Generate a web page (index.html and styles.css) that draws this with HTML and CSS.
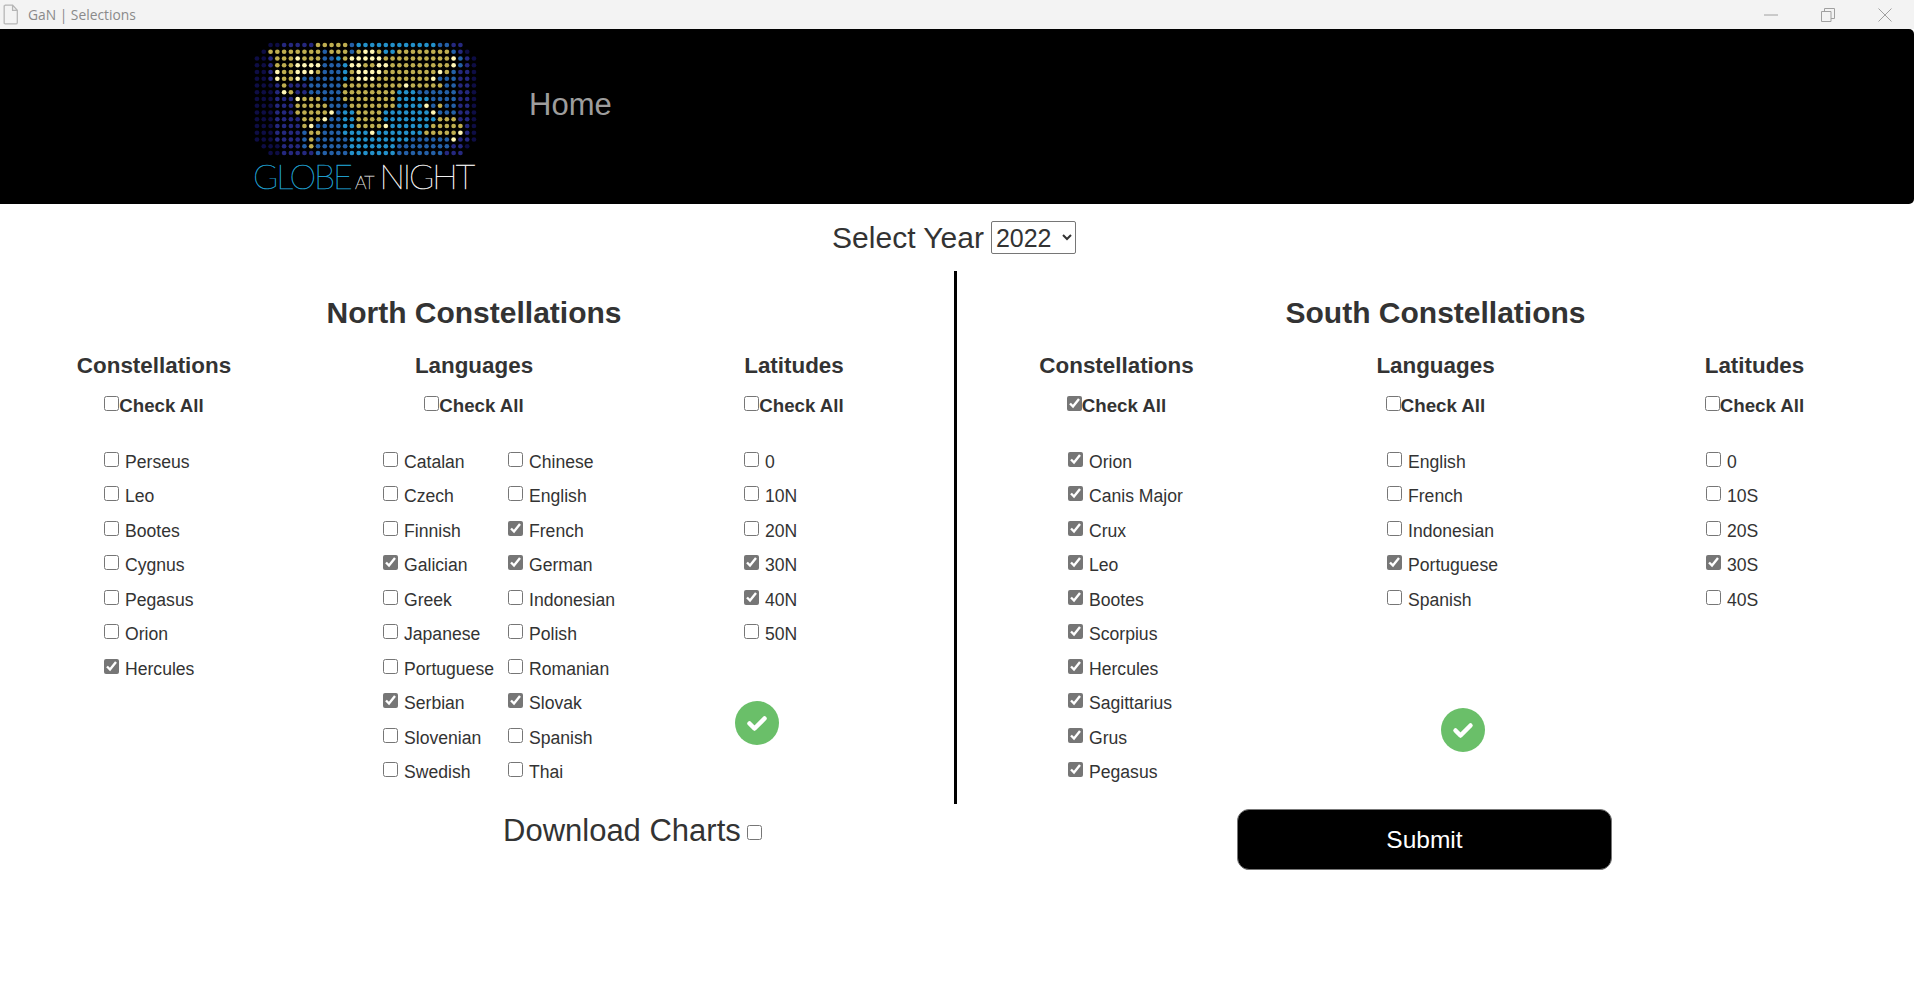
FILE: index.html
```html
<!DOCTYPE html>
<html lang="en">
<head>
    <meta charset="UTF-8">
    <meta name="viewport" content="width=device-width, initial-scale=1.0">
    <title>GaN | Selections</title>
    <link rel="stylesheet" href="styles.css">
</head>
<body>
    <div class="titlebar">
        <svg class="file-icon" width="16" height="21" viewBox="0 0 14 20"><path d="M1.500 1h7l4.500 5v11.500a1.500 1.500 0 0 1-1.500 1.500h-10a1 1 0 0 1-1-1v-16a.5.5 0 0 1 .5-.5zM8.500 1v5h4.500" fill="none" stroke="#b5b5b5" stroke-width="1.200"/></svg>
        <span class="titlebar-text">GaN | Selections</span>
        <div class="window-controls">
            <svg width="14" height="14" viewBox="0 0 14 14"><path d="M0 7h14" stroke="#a0a0a0" stroke-width="1"/></svg>
            <svg width="14" height="14" viewBox="0 0 14 14"><path d="M.5 3.500h9.500v10h-9.500zM3.500 3.500v-3h10v10h-3.500" fill="none" stroke="#a0a0a0" stroke-width="1"/></svg>
            <svg width="14" height="14" viewBox="0 0 14 14"><path d="M.5.500l13 13M13.500.500l-13 13" stroke="#a0a0a0" stroke-width="1"/></svg>
        </div>
    </div>

    <nav class="navbar">
        <div class="logo">
            <svg id="logo-dots" class="logo-dots" width="225" height="116" viewBox="0 0 225 116"></svg>
            <div class="wordmark"><span class="word-globe">GLOBE</span><span class="word-at">AT</span><span class="word-night">NIGHT</span></div>
        </div>
        <a class="nav-link" href="#">Home</a>
    </nav>

    <div class="year-row">
        <label class="year-label" for="year">Select Year</label>
        <select class="year-select" id="year">
            <option>2022</option>
        </select>
    </div>

    <div class="panels">
        <section class="panel panel-north">
            <h2 class="panel-title">North Constellations</h2>
            <div class="columns">
                <div class="column">
                    <h3 class="column-title">Constellations</h3>
                    <label class="check-all"><input type="checkbox">Check All</label>
                    <div class="items">
                        <label class="item"><input type="checkbox">Perseus</label>
                        <label class="item"><input type="checkbox">Leo</label>
                        <label class="item"><input type="checkbox">Bootes</label>
                        <label class="item"><input type="checkbox">Cygnus</label>
                        <label class="item"><input type="checkbox">Pegasus</label>
                        <label class="item"><input type="checkbox">Orion</label>
                        <label class="item"><input type="checkbox" checked>Hercules</label>
                    </div>
                </div>
                <div class="column">
                    <h3 class="column-title">Languages</h3>
                    <label class="check-all"><input type="checkbox">Check All</label>
                    <div class="items items-double">
                        <label class="item"><input type="checkbox">Catalan</label>
                        <label class="item"><input type="checkbox">Chinese</label>
                        <label class="item"><input type="checkbox">Czech</label>
                        <label class="item"><input type="checkbox">English</label>
                        <label class="item"><input type="checkbox">Finnish</label>
                        <label class="item"><input type="checkbox" checked>French</label>
                        <label class="item"><input type="checkbox" checked>Galician</label>
                        <label class="item"><input type="checkbox" checked>German</label>
                        <label class="item"><input type="checkbox">Greek</label>
                        <label class="item"><input type="checkbox">Indonesian</label>
                        <label class="item"><input type="checkbox">Japanese</label>
                        <label class="item"><input type="checkbox">Polish</label>
                        <label class="item"><input type="checkbox">Portuguese</label>
                        <label class="item"><input type="checkbox">Romanian</label>
                        <label class="item"><input type="checkbox" checked>Serbian</label>
                        <label class="item"><input type="checkbox" checked>Slovak</label>
                        <label class="item"><input type="checkbox">Slovenian</label>
                        <label class="item"><input type="checkbox">Spanish</label>
                        <label class="item"><input type="checkbox">Swedish</label>
                        <label class="item"><input type="checkbox">Thai</label>
                    </div>
                </div>
                <div class="column">
                    <h3 class="column-title">Latitudes</h3>
                    <label class="check-all"><input type="checkbox">Check All</label>
                    <div class="items">
                        <label class="item"><input type="checkbox">0</label>
                        <label class="item"><input type="checkbox">10N</label>
                        <label class="item"><input type="checkbox">20N</label>
                        <label class="item"><input type="checkbox" checked>30N</label>
                        <label class="item"><input type="checkbox" checked>40N</label>
                        <label class="item"><input type="checkbox">50N</label>
                    </div>
                    <div class="done done-north">
                        <svg width="22" height="18" viewBox="0 0 22 18"><path d="M3.500 9.500l5 5 10-10" fill="none" stroke="#fff" stroke-width="4.500" stroke-linecap="round" stroke-linejoin="round"/></svg>
                    </div>
                </div>
            </div>
        </section>

        <section class="panel panel-south">
            <h2 class="panel-title">South Constellations</h2>
            <div class="columns">
                <div class="column">
                    <h3 class="column-title">Constellations</h3>
                    <label class="check-all"><input type="checkbox" checked>Check All</label>
                    <div class="items">
                        <label class="item"><input type="checkbox" checked>Orion</label>
                        <label class="item"><input type="checkbox" checked>Canis Major</label>
                        <label class="item"><input type="checkbox" checked>Crux</label>
                        <label class="item"><input type="checkbox" checked>Leo</label>
                        <label class="item"><input type="checkbox" checked>Bootes</label>
                        <label class="item"><input type="checkbox" checked>Scorpius</label>
                        <label class="item"><input type="checkbox" checked>Hercules</label>
                        <label class="item"><input type="checkbox" checked>Sagittarius</label>
                        <label class="item"><input type="checkbox" checked>Grus</label>
                        <label class="item"><input type="checkbox" checked>Pegasus</label>
                    </div>
                </div>
                <div class="column">
                    <h3 class="column-title">Languages</h3>
                    <label class="check-all"><input type="checkbox">Check All</label>
                    <div class="items">
                        <label class="item"><input type="checkbox">English</label>
                        <label class="item"><input type="checkbox">French</label>
                        <label class="item"><input type="checkbox">Indonesian</label>
                        <label class="item"><input type="checkbox" checked>Portuguese</label>
                        <label class="item"><input type="checkbox">Spanish</label>
                    </div>
                    <div class="done done-south">
                        <svg width="22" height="18" viewBox="0 0 22 18"><path d="M3.500 9.500l5 5 10-10" fill="none" stroke="#fff" stroke-width="4.500" stroke-linecap="round" stroke-linejoin="round"/></svg>
                    </div>
                </div>
                <div class="column">
                    <h3 class="column-title">Latitudes</h3>
                    <label class="check-all"><input type="checkbox">Check All</label>
                    <div class="items">
                        <label class="item"><input type="checkbox">0</label>
                        <label class="item"><input type="checkbox">10S</label>
                        <label class="item"><input type="checkbox">20S</label>
                        <label class="item"><input type="checkbox" checked>30S</label>
                        <label class="item"><input type="checkbox">40S</label>
                    </div>
                </div>
            </div>
        </section>
    </div>

    <div class="actions">
        <label class="download"><span>Download Charts</span><input type="checkbox"></label>
        <button class="submit">Submit</button>
    </div>

    <script src="logo.js"></script>
</body>
</html>
```

FILE: styles.css
```css
* {
    box-sizing: border-box;
}
body {
    margin: 0;
    font-family: "Liberation Sans", Arial, sans-serif;
    color: #333;
    background-color: #fff;
    overflow-x: hidden;
}
input[type="checkbox"] {
    width: 15px;
    height: 15px;
    margin: 0;
    flex: none;
    accent-color: #767676;
}

.titlebar {
    display: flex;
    align-items: center;
    height: 29px;
    padding-left: 3px;
    background-color: #f3f3f3;
}
.titlebar-text {
    margin-left: 9px;
    font-family: "Open Sans", sans-serif;
    font-size: 13.800px;
    color: #8a8a8a;
}
.window-controls {
    display: flex;
    gap: 43px;
    margin-left: auto;
    margin-right: 22px;
}

.navbar {
    display: flex;
    align-items: flex-start;
    height: 175px;
    padding: 12px 0 0 253px;
    background-color: #000;
    border-radius: 0 5px 5px 0;
}
.logo {
    width: 225px;
}
.logo-dots {
    display: block;
}
.wordmark {
    display: flex;
    align-items: baseline;
    height: 36px;
    margin-top: 1px;
    line-height: 36px;
    font-family: Lato, sans-serif;
    font-weight: 100;
    white-space: nowrap;
}
.word-globe {
    font-size: 34px;
    color: #1f9cc9;
    letter-spacing: -2px;
    -webkit-text-stroke: 0.5px #1f9cc9;
}
.word-at {
    margin-left: 4px;
    font-size: 18px;
    color: #d8d8d8;
    letter-spacing: -1px;
    -webkit-text-stroke: 0.4px #d8d8d8;
}
.word-night {
    margin-left: 6px;
    font-size: 34px;
    color: #f0f0f0;
    letter-spacing: -2px;
    -webkit-text-stroke: 0.5px #f0f0f0;
}
.nav-link {
    margin: 46px 0 0 51px;
    font-size: 31px;
    color: #9d9d9d;
    text-decoration: none;
}

.year-row {
    display: flex;
    align-items: center;
    justify-content: center;
    gap: 7px;
    height: 67px;
    padding-right: 6px;
}
.year-label {
    font-size: 30px;
}
.year-select {
    width: 85px;
    height: 33px;
    font-family: "Liberation Sans", sans-serif;
    font-size: 25px;
    color: #333;
    background-color: #fff;
    border: 1px solid #767676;
    border-radius: 2px;
}

.panels {
    display: flex;
}
.panel {
    height: 533px;
}
.panel-north {
    width: 963px;
    margin-left: -6px;
    border-right: 3px solid #000;
}
.panel-south {
    flex: 1;
}
.panel-title {
    margin: 0;
    padding-top: 24px;
    height: 75px;
    font-size: 30px;
    line-height: 36px;
    text-align: center;
}
.columns {
    display: grid;
    grid-template-columns: repeat(3, 1fr);
}
.column-title {
    margin: 0;
    height: 38px;
    font-size: 22.400px;
    line-height: 39px;
    text-align: center;
}
.check-all {
    display: flex;
    align-items: center;
    justify-content: center;
    height: 40px;
    padding-top: 4px;
    font-size: 18.700px;
    font-weight: bold;
}
.check-all input {
    margin-bottom: 6px;
}
.items {
    display: grid;
    grid-auto-rows: 34.500px;
    margin-top: 21px;
    padding-left: 110px;
}
.panel-south .items {
    padding-left: 111px;
}
.items-double {
    grid-template-columns: 125px 125px;
    padding-left: 69px;
}
.item {
    display: flex;
    align-items: center;
    gap: 6px;
    font-size: 17.600px;
    white-space: nowrap;
}
.item input {
    margin-bottom: 6px;
}

.done {
    display: flex;
    align-items: center;
    justify-content: center;
    width: 44px;
    height: 44px;
    border-radius: 50%;
    background-color: #6abf69;
}
.done-north {
    margin: 49px 0 0 101px;
}
.done-south {
    margin: 90px 0 0 165px;
}

.actions {
    display: flex;
    align-items: flex-start;
    padding-top: 5px;
}
.download {
    display: flex;
    align-items: center;
    gap: 6px;
    width: 1237px;
    padding: 4px 0 0 503px;
    font-size: 31px;
}
.download input {
    margin-top: 2px;
}
.submit {
    width: 375px;
    height: 61px;
    font-family: "Liberation Sans", sans-serif;
    font-size: 24.500px;
    color: #fff;
    background-color: #000;
    border: 1px solid #777;
    border-radius: 12px;
}
```

FILE: logo.js
```js
// dots of the logo, one string per row
// n/d = dark navy, b/c = blues, y = gold, w = bright
const rows = [
    '..nndddddyyyyybccccccccccccbbdd..',
    '.nyyyyyyyybyyybywwyccyyyyyyyybdn.',
    'nndyyywyyybbcywwwwwyyyyyyyyyywbdn',
    'nndyyywwwwbbbcwwyywwyyyyyyyyywbdn',
    'nndwyywwwybbbcywwwwyyyyyyyywybddn',
    'nndwyywbbbbbbcywwwyyyyyyyywbbbddn',
    'nnndydddbbbbbyyyyyyyyywyyyyybbddn',
    'nnndwyddbbbbbyyyyyyyycccbbbbbbddn',
    'nnndddwyyybbbyyyyyyyycccccbbbbddn',
    'nnndddyyyyybbbyyyyyyyccccwbybbddn',
    'nnndddyyyyywbccyyyycccccccwbbbddn',
    'nnnddddyyywbbccyyyyccccccccyyyddn',
    'nnnddddywbbbbccyyyywccccccyyyyydn',
    'nnnddddbyybbbccccwcccccccyyyyywdn',
    'nnnddddbybbbbbcccccccccbbbbbbwddn',
    '.nnndddbybbbbbcccccccbbbbbbbbddn.',
    '..nndddddbbbbbcccccccbbbbbbbddd..'
];
const colors = {
    n: '#0e0d45',
    d: '#25287f',
    b: '#2460a8',
    c: '#2391cb',
    y: '#bfae50',
    w: '#fff6b4'
};

const dots = document.getElementById('logo-dots');
let circles = '';
rows.forEach(function (row, y) {
    row.split('').forEach(function (dot, x) {
        if (colors[dot]) {
            circles += '<circle cx="' + (4 + x * 6.78) + '" cy="' + (4 + y * 6.75) + '" r="2.350" fill="' + colors[dot] + '"/>';
        }
    });
});
dots.innerHTML = circles;
```
